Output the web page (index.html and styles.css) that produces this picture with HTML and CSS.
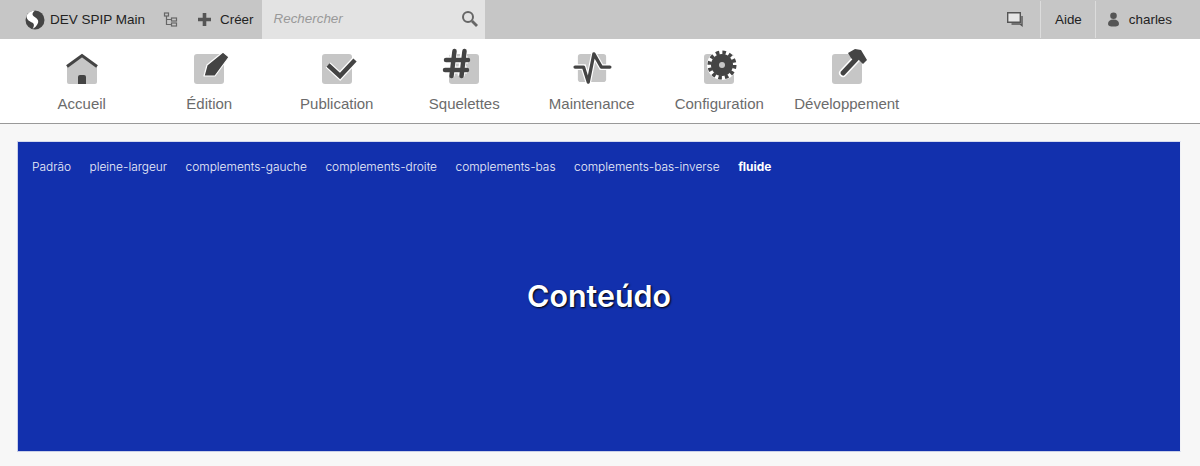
FILE: index.html
```html
<!DOCTYPE html>
<html lang="fr">
<head>
    <meta charset="UTF-8">
    <title>DEV SPIP Main</title>
    <link rel="stylesheet" href="styles.css">
</head>
<body>

    <div class="toolbar">
        <div class="toolbar-left">
            <a class="tool site">
                <svg width="20" height="20" viewBox="0 0 20 20"><circle cx="10" cy="10" r="9.500" fill="#444"/><path d="M1.500 6C3 2 7 .5 10 .7 7.500 2 6.500 4.500 9 6.500c3 2 5.500 4 3.500 7.500-1 2-3 4-5 5 1.500-2.500 2-4.500.5-6C5.500 11.500 1.500 10.500 1.500 6z" fill="#fff"/></svg>
                <span>DEV SPIP Main</span>
            </a>
            <a class="tool tree">
                <svg width="15" height="15" viewBox="0 0 15 15" fill="none" stroke="#666" stroke-width="1.200"><rect x="1.500" y="1" width="4" height="3"/><rect x="8.500" y="6" width="5" height="3"/><rect x="8.500" y="11" width="5" height="3"/><path d="M3.500 4v8.500h5M3.500 7.500h5"/></svg>
            </a>
            <a class="tool create">
                <svg width="15" height="15" viewBox="0 0 15 15"><path d="M7.500 1v13M1 7.500h13" stroke="#555" stroke-width="3.600"/></svg>
                <span>Créer</span>
            </a>
            <div class="search">
                <span class="search-text">Rechercher</span>
                <svg width="17" height="17" viewBox="0 0 17 17" fill="none" stroke="#666"><circle cx="7" cy="7" r="5" stroke-width="2"/><path d="M11 11l5 5" stroke-width="2.800"/></svg>
            </div>
        </div>
        <div class="toolbar-right">
            <a class="tool messages">
                <svg width="16" height="15" viewBox="0 0 16 15" fill="none" stroke="#555" stroke-width="1.400"><path d="M.7.700h12.600v9.600H.7z" fill="#e6e6e6"/><path d="M15 4v9.500l-2-1.500H4.500"/></svg>
            </a>
            <a class="tool help">Aide</a>
            <a class="tool user">
                <svg width="11" height="15" viewBox="0 0 11 15" fill="#555"><circle cx="5.500" cy="3.700" r="3.300"/><path d="M0 12c0-3 2-4.500 5.500-4.500S11 9 11 12c0 2-2 2.500-5.500 2.500S0 14 0 12z"/></svg>
                <span>charles</span>
            </a>
        </div>
    </div>

    <nav class="menu">
        <a class="menu-item">
            <svg class="icon" viewBox="0 0 32 32"><path d="M1 15L16 4l15 11v15a2 2 0 0 1-2 2H3a2 2 0 0 1-2-2z" fill="#c6c6c6"/><path d="M1 14.500L16 3.500l15 11" fill="none" stroke="#444" stroke-width="3"/><path d="M12 32v-7a2 2 0 0 1 2-2h4a2 2 0 0 1 2 2v7z" fill="#444"/></svg>
            <span>Accueil</span>
        </a>
        <a class="menu-item">
            <svg class="icon" viewBox="-2 0 36 32"><rect x="1" y="2" width="30" height="30" rx="3" fill="#c6c6c6"/><path d="M11 24l3-11L30 0l6 5-14 19z" fill="#444" stroke="#fff" stroke-width="1.200" stroke-linejoin="round"/></svg>
            <span>Édition</span>
        </a>
        <a class="menu-item">
            <svg class="icon" viewBox="-2 0 36 32"><rect x="1" y="2" width="30" height="30" rx="3" fill="#c6c6c6"/><path d="M7 13l12 11L34 8" fill="none" stroke="#fff" stroke-width="7"/><path d="M7 13l12 11L34 8" fill="none" stroke="#444" stroke-width="4.500"/></svg>
            <span>Publication</span>
        </a>
        <a class="menu-item">
            <svg class="icon" viewBox="2 0 36 32"><rect x="5" y="2" width="30" height="30" rx="3" fill="#c6c6c6"/><path d="M10 -1L7 24M20 -1l-3 25M2 8h22M1 18h22" stroke="#fff" stroke-width="7"/><path d="M10.500 -1L7.500 24M20.500 -1l-3 25M2 8h22M1 18h22" stroke="#444" stroke-width="4.500" stroke-linecap="round"/></svg>
            <span>Squelettes</span>
        </a>
        <a class="menu-item">
            <svg class="icon wide" viewBox="0 0 40 34"><rect x="5" y="2" width="30" height="30" rx="3" fill="#c6c6c6"/><path d="M2 16h9l5 16 6-30 8 14h9" fill="none" stroke="#fff" stroke-width="6"/><path d="M2 16h9l5 16 6-30 8 14h9" fill="none" stroke="#444" stroke-width="3.500" stroke-linecap="round" stroke-linejoin="round"/></svg>
            <span>Maintenance</span>
        </a>
        <a class="menu-item">
            <svg class="icon" viewBox="-2 0 36 32"><rect x="1" y="2" width="30" height="30" rx="3" fill="#c6c6c6"/><circle cx="19" cy="13" r="15" fill="#fff"/><circle cx="19" cy="13" r="11" fill="#444"/><circle cx="19" cy="13" r="12.500" fill="none" stroke="#444" stroke-width="4" stroke-dasharray="3.500 3.045"/><circle cx="19" cy="13" r="3" fill="#c6c6c6"/></svg>
            <span>Configuration</span>
        </a>
        <a class="menu-item">
            <svg class="icon" viewBox="-2 0 36 32"><rect x="1" y="2" width="30" height="30" rx="3" fill="#c6c6c6"/><path d="M12 21L27 5" stroke="#fff" stroke-width="8" stroke-linecap="round"/><path d="M12 21L27 5" stroke="#444" stroke-width="5" stroke-linecap="round"/><path d="M17 1l7-4 6 1 6 10-4 4-5-5-4 2-3-3z" fill="#444"/></svg>
            <span>Développement</span>
        </a>
    </nav>

    <main class="page">
        <section class="demo">
            <ul class="demo-links">
                <li>Padrão</li>
                <li>pleine-largeur</li>
                <li>complements-gauche</li>
                <li>complements-droite</li>
                <li>complements-bas</li>
                <li>complements-bas-inverse</li>
                <li class="active">fluide</li>
            </ul>
            <div class="demo-body">
                <h1>Conteúdo</h1>
            </div>
        </section>
    </main>

</body>
</html>
```

FILE: styles.css
```css
* {
    box-sizing: border-box;
}
html, body {
    height: 100%;
}
body {
    margin: 0;
    font-family: "Liberation Sans", Arial, sans-serif;
    background-color: #f7f7f7;
    overflow: hidden;
}

/* Top bar */
.toolbar {
    display: flex;
    justify-content: space-between;
    height: 39px;
    background: #c6c6c6;
    font-size: 13.400px;
    color: #222;
}
.toolbar-left, .toolbar-right {
    display: flex;
    align-items: stretch;
}
.tool {
    display: flex;
    align-items: center;
    gap: 6px;
}
.site {
    margin-left: 25px;
    gap: 5px;
}
.site span {
    font-size: 13.500px;
}
.tree {
    margin-left: 18px;
}
.create {
    margin-left: 19px;
    gap: 8px;
    margin-right: 8px;
}
.search {
    display: flex;
    align-items: center;
    justify-content: space-between;
    width: 223px;
    padding: 0 7px 2px 12px;
    background: #e3e3e3;
}
.search-text {
    font-style: italic;
    color: #999;
}
.messages {
    padding: 0 17px 0 0;
    border-right: 1px solid #dcdcdc;
    margin: 1px 0;
}
.help {
    padding: 0 13px 0 14px;
    border-right: 1px solid #dcdcdc;
    margin: 1px 0;
}
.user {
    padding: 0 28px 0 12px;
    gap: 10px;
}

/* Main menu */
.menu {
    display: flex;
    height: 85px;
    padding-left: 18px;
    background: #fff;
    border-bottom: 1px solid #999;
}
.menu-item {
    display: flex;
    flex-direction: column;
    align-items: center;
    width: 127.500px;
    font-size: 15px;
    color: #6b6b6b;
}
.menu-item .icon {
    width: 36px;
    height: 32px;
    margin: 13px 0 11px;
    overflow: visible;
}
.menu-item .wide {
    width: 40px;
}
.menu-item span {
    line-height: 18px;
    white-space: nowrap;
}

/* Content */
.page {
    padding: 17px 19px 14px 17px;
}
.demo {
    height: 311px;
    background: #1230ad;
    border: 1px solid #c9cfe8;
    border-right-color: #f0f1f6;
    border-top-color: #d5d9ee;
    color: #fff;
    font-family: Inter, "Liberation Sans", sans-serif;
}
.demo-links {
    display: flex;
    gap: 18.500px;
    margin: 0;
    padding: 17px 14px 0;
    list-style: none;
    font-size: 11.900px;
    font-weight: 300;
    line-height: 16px;
    color: #eef0fa;
}
.demo-links .active {
    font-weight: 700;
    color: #fff;
}
.demo-body {
    display: flex;
    justify-content: center;
    padding-top: 101px;
}
.demo-body h1 {
    margin: 0;
    font-size: 30.400px;
    font-weight: 600;
    line-height: 40px;
    text-shadow: 1px 1px 2px #000;
}
```
